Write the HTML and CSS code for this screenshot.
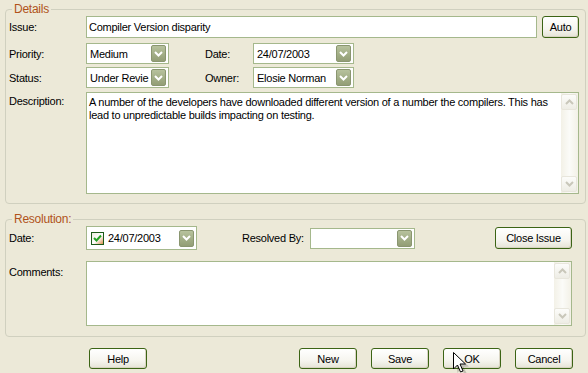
FILE: index.html
```html
<!DOCTYPE html>
<html lang="en">
<head>
    <meta charset="UTF-8">
    <title>Issue</title>
    <link rel="stylesheet" href="styles.css">
</head>
<body>
    <div class="dialog">
        <fieldset class="group details">
            <legend>Details</legend>
            <div class="row row-issue">
                <span class="label">Issue:</span>
                <div class="field issue">Compiler Version disparity</div>
                <button class="btn btn-auto">Auto</button>
            </div>
            <div class="row row-combo first">
                <span class="label">Priority:</span>
                <div class="combo combo-small"><span class="value">Medium</span><span class="drop"><svg width="9" height="6" viewBox="0 0 9 6"><path d="M1 1 L4.5 4.5 L8 1" fill="none" stroke="#fff" stroke-width="2"/></svg></span></div>
                <span class="label label-mid">Date:</span>
                <div class="combo combo-mid"><span class="value">24/07/2003</span><span class="drop"><svg width="9" height="6" viewBox="0 0 9 6"><path d="M1 1 L4.5 4.5 L8 1" fill="none" stroke="#fff" stroke-width="2"/></svg></span></div>
            </div>
            <div class="row row-combo">
                <span class="label">Status:</span>
                <div class="combo combo-small"><span class="value">Under Revie</span><span class="drop"><svg width="9" height="6" viewBox="0 0 9 6"><path d="M1 1 L4.5 4.5 L8 1" fill="none" stroke="#fff" stroke-width="2"/></svg></span></div>
                <span class="label label-mid">Owner:</span>
                <div class="combo combo-mid"><span class="value">Elosie Norman</span><span class="drop"><svg width="9" height="6" viewBox="0 0 9 6"><path d="M1 1 L4.5 4.5 L8 1" fill="none" stroke="#fff" stroke-width="2"/></svg></span></div>
            </div>
            <div class="row row-memo">
                <span class="label label-top">Description:</span>
                <div class="memo memo-desc">
                    <div class="memo-text">A number of the developers have downloaded different version of a number the compilers. This has lead to unpredictable builds impacting on testing.</div>
                    <div class="scrollbar">
                        <span class="arrow"><svg width="9" height="6" viewBox="0 0 9 6"><path d="M1 5 L4.5 1.5 L8 5" fill="none" stroke="#c9c7ba" stroke-width="2"/></svg></span>
                        <span class="arrow"><svg width="9" height="6" viewBox="0 0 9 6"><path d="M1 1 L4.5 4.5 L8 1" fill="none" stroke="#c9c7ba" stroke-width="2"/></svg></span>
                    </div>
                </div>
            </div>
        </fieldset>

        <fieldset class="group resolution">
            <legend>Resolution:</legend>
            <div class="row row-resolve">
                <span class="label">Date:</span>
                <div class="combo combo-date">
                    <span class="check"><svg width="9" height="8" viewBox="0 0 9 8"><path d="M1 4 L3.5 6.5 L8 1.5" fill="none" stroke="#21a121" stroke-width="2"/></svg></span>
                    <span class="value">24/07/2003</span>
                    <span class="drop"><svg width="9" height="6" viewBox="0 0 9 6"><path d="M1 1 L4.5 4.5 L8 1" fill="none" stroke="#fff" stroke-width="2"/></svg></span>
                </div>
                <span class="label label-resolved">Resolved By:</span>
                <div class="combo combo-resolved"><span class="value"></span><span class="drop"><svg width="9" height="6" viewBox="0 0 9 6"><path d="M1 1 L4.5 4.5 L8 1" fill="none" stroke="#fff" stroke-width="2"/></svg></span></div>
                <button class="btn btn-close">Close Issue</button>
            </div>
            <div class="row row-memo row-comments">
                <span class="label label-top">Comments:</span>
                <div class="memo memo-comments">
                    <div class="memo-text"></div>
                    <div class="scrollbar">
                        <span class="arrow"><svg width="9" height="6" viewBox="0 0 9 6"><path d="M1 5 L4.5 1.5 L8 5" fill="none" stroke="#c9c7ba" stroke-width="2"/></svg></span>
                        <span class="arrow"><svg width="9" height="6" viewBox="0 0 9 6"><path d="M1 1 L4.5 4.5 L8 1" fill="none" stroke="#c9c7ba" stroke-width="2"/></svg></span>
                    </div>
                </div>
            </div>
        </fieldset>

        <div class="buttons">
            <button class="btn">Help</button>
            <div class="buttons-right">
                <button class="btn">New</button>
                <button class="btn">Save</button>
                <button class="btn">OK</button>
                <button class="btn">Cancel</button>
            </div>
        </div>
    </div>

    <!-- mouse pointer over the OK button -->
    <svg class="cursor" width="16" height="24" viewBox="0 0 16 24">
        <path d="M2.5 2.5 L4.5 21 L8 16 L12 23 L14 22 L10.5 15 L16 14.5 Z" fill="#000" opacity="0.18"/>
        <path d="M0.5 0.5 L0.5 17 L4.5 13 L7.5 20 L10 19 L7 12 L12.5 12 Z" fill="#fff" stroke="#000" stroke-width="1"/>
    </svg>
</body>
</html>
```

FILE: styles.css
```css
* {
    margin: 0;
    padding: 0;
    box-sizing: border-box;
}

body {
    font-family: "Liberation Sans", Arial, sans-serif;
    font-size: 11px;
    letter-spacing: -0.25px;
    background: #ece9d8;
    color: #000;
    overflow: hidden;
    width: 588px;
    height: 373px;
    position: relative;
}

.dialog {
    padding: 3px 2px 0 5px;
}

.group {
    width: 581px;
    border: 1px solid #d0d0bf;
    border-radius: 4px;
    padding: 0 6px 9px 3px;
}

.group legend {
    margin-left: 3px;
    padding: 0 2px;
    line-height: 13px;
    color: #b0531a;
    font-size: 12px;
}

.resolution {
    margin-top: 9px;
    padding-bottom: 10px;
}

.row {
    display: flex;
    align-items: center;
}

.label {
    width: 77px;
    flex-shrink: 0;
}

.label-top {
    align-self: flex-start;
}

.row-issue {
    height: 22px;
}

.row-combo {
    height: 21px;
    margin-top: 3px;
}

.row-combo.first {
    margin-top: 5px;
}

.row-memo {
    margin-top: 4px;
    align-items: flex-start;
}

.row-memo .label {
    padding-top: 3px;
}

.row-comments {
    margin-top: 11px;
}

.row-comments .label {
    padding-top: 5px;
}

.field,
.combo,
.memo {
    background: #fff;
    border: 1px solid #a5b88c;
}

.field {
    height: 22px;
    width: 451px;
    padding: 3px 2px;
    line-height: 14px;
}

.combo {
    height: 21px;
    display: flex;
    align-items: center;
    padding: 0 2px 0 3px;
}

.combo .value {
    flex: 1;
    white-space: nowrap;
    overflow: hidden;
}

.drop {
    width: 15px;
    height: 17px;
    display: flex;
    align-items: center;
    justify-content: center;
    background: linear-gradient(180deg, #b7c29d 0%, #a0ac84 60%, #939e76 100%);
    border: 1px solid #8a9670;
    border-radius: 2px;
    flex-shrink: 0;
}

.combo-small {
    width: 83px;
}

.label-mid {
    width: 48px;
    margin-left: 36px;
}

.combo-mid {
    width: 101px;
}

.memo {
    display: flex;
}

.memo-text {
    flex: 1;
    padding: 3px 2px;
    line-height: 13px;
}

.memo-desc {
    width: 493px;
    height: 102px;
}

.memo-comments {
    width: 486px;
    height: 65px;
}

.scrollbar {
    width: 17px;
    display: flex;
    flex-direction: column;
    justify-content: space-between;
    background: linear-gradient(90deg, #f3f1e7 0%, #fbfbf8 50%, #f3f1e7 100%);
    padding: 1px 0;
}

.arrow {
    height: 16px;
    width: 16px;
    display: flex;
    align-items: center;
    justify-content: center;
    background: linear-gradient(180deg, #fcfcfa 0%, #eeede5 100%);
    border: 1px solid #e8e6dc;
    border-radius: 2px;
}

.row-resolve {
    height: 24px;
}

.combo-date {
    width: 111px;
    height: 24px;
    padding: 0 2px 0 4px;
}

.check {
    width: 13px;
    height: 13px;
    border: 1px solid #1c5a18;
    background: linear-gradient(135deg, #eceadf 0%, #ffffff 55%, #d98b4a 100%);
    display: flex;
    align-items: center;
    justify-content: center;
    margin-right: 4px;
    flex-shrink: 0;
}

.label-resolved {
    width: 68px;
    margin-left: 45px;
}

.combo-resolved {
    width: 105px;
}

.btn {
    font-family: "Liberation Sans", Arial, sans-serif;
    font-size: 11px;
    letter-spacing: -0.25px;
    color: #000;
    height: 21px;
    width: 58px;
    border: 1px solid #3c6415;
    border-radius: 3px;
    background: linear-gradient(180deg, #ffffff 0%, #f6f5ef 60%, #e5e3d6 100%);
    box-shadow: inset -1px -1px 0 #d8d4c2;
}

.btn-auto {
    width: 37px;
    height: 22px;
    margin-left: 5px;
}

.btn-close {
    width: 77px;
    height: 22px;
    margin-left: 80px;
}

.buttons {
    display: flex;
    margin-top: 11px;
    padding-left: 84px;
}

.buttons-right {
    display: flex;
    gap: 14px;
    margin-left: 152px;
}

.cursor {
    position: absolute;
    left: 453px;
    top: 352px;
}
```
